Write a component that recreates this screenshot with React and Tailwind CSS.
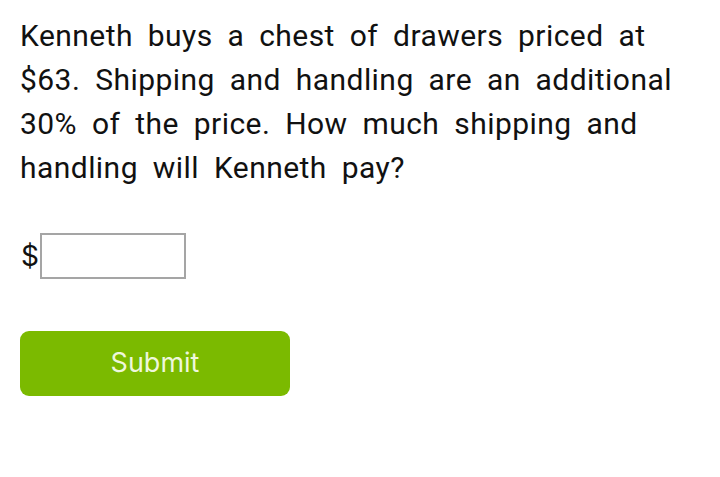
export default function App() {
  return (
    <div className="w-[720px] h-[477px] bg-white px-5 pt-[14px] font-['Roboto',sans-serif] text-[#111]">
      <p className="text-[30px] leading-[44px] whitespace-nowrap [word-spacing:7px] tracking-[0.45px]">
        Kenneth buys a chest of drawers priced at
        <br />
        $63. Shipping and handling are an additional
        <br />
        30% of the price. How much shipping and
        <br />
        handling will Kenneth pay?
      </p>
      <div className="mt-[43px] flex items-center h-[46px]">
        <span className="text-[28px] leading-none font-['Inter',sans-serif] ml-[1px] mr-[1px]">$</span>
        <div className="w-[146px] h-[46px] border-2 border-[#a5a5a5] bg-white"></div>
      </div>
      <button className="mt-[52px] w-[270px] h-[65px] rounded-[9px] bg-[#7bba00] text-[#eef7dc] text-[27px] font-['Inter',sans-serif] flex items-center justify-center">
        Submit
      </button>
    </div>
  );
}
